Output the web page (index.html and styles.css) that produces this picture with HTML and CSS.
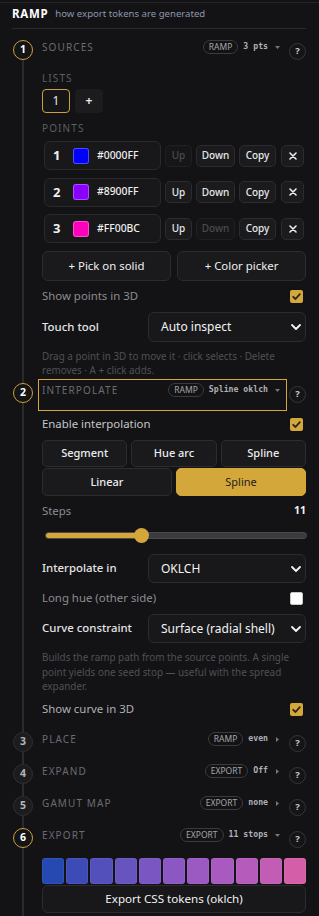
FILE: index.html
```html
<!DOCTYPE html>
<html>
<head>
<meta charset="utf-8">
<link rel="stylesheet" href="styles.css">
</head>
<body>
<div class="panel">
  <div class="top"><span class="brand">RAMP</span><span class="sub">how export tokens are generated</span></div>
  <div class="steps">
    <section class="step">
      <div class="head">
        <span class="num on">1</span>
        <div class="hb">
          <span class="title">SOURCES</span>
          <span class="pill">RAMP</span><span class="val">3 pts</span>
          <span class="caret"><svg width="5" height="3" viewBox="0 0 5 3"><path d="M0 0H5L2.5 3Z" fill="#77777c"/></svg></span>
        </div>
        <span class="help">?</span>
      </div>
      <div class="body b1">
        <div class="label">LISTS</div>
        <div class="lists"><button class="lb sel">1</button><button class="lb plus">+</button></div>
        <div class="label l2">POINTS</div>
        <div class="points">
          <div class="pt">
            <div class="pbox"><span class="pn">1</span><span class="sw" style="background:#0000FF"></span><span class="hex">#0000FF</span></div>
            <button class="sb up dis">Up</button><button class="sb down">Down</button><button class="sb copy">Copy</button><button class="sb x"><svg width="8" height="8" viewBox="0 0 8 8"><path d="M1 1L7 7M7 1L1 7" stroke="#ececee" stroke-width="1.6" stroke-linecap="round"/></svg></button>
          </div>
          <div class="pt">
            <div class="pbox"><span class="pn">2</span><span class="sw" style="background:#8900FF"></span><span class="hex">#8900FF</span></div>
            <button class="sb up">Up</button><button class="sb down">Down</button><button class="sb copy">Copy</button><button class="sb x"><svg width="8" height="8" viewBox="0 0 8 8"><path d="M1 1L7 7M7 1L1 7" stroke="#ececee" stroke-width="1.6" stroke-linecap="round"/></svg></button>
          </div>
          <div class="pt">
            <div class="pbox"><span class="pn">3</span><span class="sw" style="background:#FF00BC"></span><span class="hex">#FF00BC</span></div>
            <button class="sb up">Up</button><button class="sb down dis">Down</button><button class="sb copy">Copy</button><button class="sb x"><svg width="8" height="8" viewBox="0 0 8 8"><path d="M1 1L7 7M7 1L1 7" stroke="#ececee" stroke-width="1.6" stroke-linecap="round"/></svg></button>
          </div>
        </div>
        <div class="pick"><button>+ Pick on solid</button><button>+ Color picker</button></div>
        <div class="check-row dim"><span>Show points in 3D</span><span class="cb"><svg width="13" height="13" viewBox="0 0 13 13"><path d="M3.2 6.8L5.5 9L9.8 4.2" stroke="#2a2418" stroke-width="1.8" fill="none" stroke-linecap="round" stroke-linejoin="round"/></svg></span></div>
        <div class="field"><span class="lab">Touch tool</span><div class="select"><span>Auto inspect</span><svg width="10" height="6" viewBox="0 0 10 6"><path d="M1 1L5 5L9 1" stroke="#f2f2f2" stroke-width="1.8" fill="none" stroke-linecap="round" stroke-linejoin="round"/></svg></div></div>
        <p class="hint">Drag a point in 3D to move it · click selects · Delete<br>removes · A + click adds.</p>
      </div>
    </section>

    <section class="step">
      <div class="head">
        <span class="num on">2</span>
        <div class="hb focus">
          <span class="title">INTERPOLATE</span>
          <span class="pill">RAMP</span><span class="val">Spline oklch</span>
          <span class="caret"><svg width="5" height="3" viewBox="0 0 5 3"><path d="M0 0H5L2.5 3Z" fill="#77777c"/></svg></span>
        </div>
        <span class="help">?</span>
      </div>
      <div class="body b2">
        <div class="check-row en"><span>Enable interpolation</span><span class="cb"><svg width="13" height="13" viewBox="0 0 13 13"><path d="M3.2 6.8L5.5 9L9.8 4.2" stroke="#2a2418" stroke-width="1.8" fill="none" stroke-linecap="round" stroke-linejoin="round"/></svg></span></div>
        <div class="seg three"><button>Segment</button><button>Hue arc</button><button>Spline</button></div>
        <div class="seg two"><button>Linear</button><button class="act">Spline</button></div>
        <div class="steps-row"><span>Steps</span><span class="count">11</span></div>
        <div class="slider"><div class="track"><div class="fill" style="width:36.6%"></div><span class="thumb" style="left:36.6%"></span></div></div>
        <div class="field f-int"><span class="lab">Interpolate in</span><div class="select"><span>OKLCH</span><svg width="10" height="6" viewBox="0 0 10 6"><path d="M1 1L5 5L9 1" stroke="#f2f2f2" stroke-width="1.8" fill="none" stroke-linecap="round" stroke-linejoin="round"/></svg></div></div>
        <div class="check-row dim"><span>Long hue (other side)</span><span class="cb off"></span></div>
        <div class="field"><span class="lab">Curve constraint</span><div class="select"><span>Surface (radial shell)</span><svg width="10" height="6" viewBox="0 0 10 6"><path d="M1 1L5 5L9 1" stroke="#f2f2f2" stroke-width="1.8" fill="none" stroke-linecap="round" stroke-linejoin="round"/></svg></div></div>
        <p class="hint h2">Builds the ramp path from the source points. A single<br>point yields one seed stop — useful with the spread<br>expander.</p>
        <div class="check-row lite"><span>Show curve in 3D</span><span class="cb"><svg width="13" height="13" viewBox="0 0 13 13"><path d="M3.2 6.8L5.5 9L9.8 4.2" stroke="#2a2418" stroke-width="1.8" fill="none" stroke-linecap="round" stroke-linejoin="round"/></svg></span></div>
      </div>
    </section>

    <section class="step">
      <div class="head">
        <span class="num">3</span>
        <div class="hb">
          <span class="title">PLACE</span>
          <span class="pill">RAMP</span><span class="val">even</span>
          <span class="caret"><svg width="3" height="5" viewBox="0 0 3 5"><path d="M0 0V5L3 2.5Z" fill="#77777c"/></svg></span>
        </div>
        <span class="help">?</span>
      </div>
    </section>

    <section class="step">
      <div class="head">
        <span class="num">4</span>
        <div class="hb">
          <span class="title">EXPAND</span>
          <span class="pill">EXPORT</span><span class="val">Off</span>
          <span class="caret"><svg width="3" height="5" viewBox="0 0 3 5"><path d="M0 0V5L3 2.5Z" fill="#77777c"/></svg></span>
        </div>
        <span class="help">?</span>
      </div>
    </section>

    <section class="step">
      <div class="head">
        <span class="num">5</span>
        <div class="hb">
          <span class="title">GAMUT MAP</span>
          <span class="pill">EXPORT</span><span class="val">none</span>
          <span class="caret"><svg width="3" height="5" viewBox="0 0 3 5"><path d="M0 0V5L3 2.5Z" fill="#77777c"/></svg></span>
        </div>
        <span class="help">?</span>
      </div>
    </section>

    <section class="step">
      <div class="head">
        <span class="num on">6</span>
        <div class="hb">
          <span class="title">EXPORT</span>
          <span class="pill">EXPORT</span><span class="val">11 stops</span>
          <span class="caret"><svg width="5" height="3" viewBox="0 0 5 3"><path d="M0 0H5L2.5 3Z" fill="#77777c"/></svg></span>
        </div>
        <span class="help">?</span>
      </div>
      <div class="body b6">
        <div class="swatches">
          <span style="background:#2549b1"></span>
          <span style="background:#3c4bb6"></span>
          <span style="background:#5350bb"></span>
          <span style="background:#6754bf"></span>
          <span style="background:#7a56c2"></span>
          <span style="background:#8b58c3"></span>
          <span style="background:#9b59c2"></span>
          <span style="background:#a95ac0"></span>
          <span style="background:#b55bbb"></span>
          <span style="background:#c25cb4"></span>
          <span style="background:#d45fa8"></span>
        </div>
        <button class="export">Export CSS tokens (oklch)</button>
      </div>
    </section>
  </div>
</div>
</body>
</html>
```
FILE: styles.css
```css
* { box-sizing: border-box; }
html, body { margin: 0; padding: 0; }
body {
  background: #131315;
  color: #e6e6e8;
  font-family: "Noto Sans", "Open Sans", sans-serif;
  font-size: 11.4px;
  line-height: 1.3;
  width: 319px;
}
button {
  font: inherit;
  color: inherit;
  margin: 0;
  padding: 0;
  cursor: pointer;
}
p { margin: 0; }

.panel {
  margin-top: 2px;
  border-top: 1px solid #26262a;
  padding: 0 13px 0 12px;
}
.top {
  height: 26px;
  display: flex;
  align-items: center;
  gap: 7px;
  padding-bottom: 3px;
  border-bottom: 1px solid #2a2a2e;
}
.brand {
  font-weight: 700;
  font-size: 11.5px;
  letter-spacing: 0.7px;
  color: #ffffff;
}
.sub {
  font-size: 9.6px;
  color: #8b96ae;
}

.steps {
  padding: 7px 0 10px 1px;
  background: linear-gradient(#2a2a2e, #2a2a2e) no-repeat 10px 20px / 2px 100%;
}
.head {
  display: flex;
  height: 32px;
}
.num {
  flex: none;
  width: 20px;
  height: 20px;
  margin-top: 4px;
  border-radius: 50%;
  border: 1.5px solid #2f2f33;
  background: #1c1c1f;
  display: flex;
  align-items: center;
  justify-content: center;
  font-size: 10.5px;
  font-weight: 700;
  color: #b5b5ba;
}
.num.on {
  border-color: #c9a23f;
  background: #141416;
  color: #ffffff;
}
.hb {
  flex: 1;
  margin-left: 5px;
  height: 32px;
  border: 1px solid transparent;
  padding: 3px 6px 0 3px;
  display: flex;
  align-items: flex-start;
}
.hb.focus { border-color: #d4a73b; }
.title {
  flex: 1;
  font-size: 10px;
  line-height: 14px;
  letter-spacing: 1.1px;
  color: #6b6b71;
}
.pill {
  height: 14px;
  line-height: 12px;
  font-size: 8.5px;
  padding: 0 5px;
  border: 1px solid #3a3a3f;
  border-radius: 7px;
  color: #a6a6ab;
}
.val {
  margin-left: 5px;
  font-family: "DejaVu Sans Mono", monospace;
  font-size: 8.2px;
  font-weight: 700;
  line-height: 13px;
  color: #b0b0b5;
}
.caret {
  width: 5px;
  height: 14px;
  margin-left: 7px;
  display: flex;
  align-items: center;
  justify-content: center;
}
.help {
  flex: none;
  width: 17px;
  height: 17px;
  margin: 7px 0 0 2px;
  border: 1px solid #36363b;
  border-radius: 50%;
  background: #151517;
  display: flex;
  align-items: center;
  justify-content: center;
  font-size: 9.5px;
  font-weight: 700;
  color: #c9c9ce;
}

.body { margin-left: 29px; }
.b1 { padding-bottom: 2px; }
.b2 { padding-bottom: 8px; }

.label {
  margin-top: 4px;
  font-size: 10px;
  line-height: 13px;
  letter-spacing: 1.1px;
  color: #5d5d63;
}
.label.l2 { margin-top: 9px; }
.lists {
  display: flex;
  gap: 5px;
  margin-top: 4px;
}
.lb {
  width: 28px;
  height: 24px;
  border-radius: 4px;
  background: #1c1c1f;
  border: 1px solid #1c1c1f;
  font-size: 12px;
  color: #e6e6e8;
}
.lb.sel {
  border-color: #c9a23f;
  background: #151517;
}
.lb.plus { font-weight: 700; }

.points {
  display: flex;
  flex-direction: column;
  gap: 7.5px;
  margin-top: 6px;
  padding: 0 2px;
}
.pt {
  display: flex;
  align-items: center;
  gap: 4px;
  height: 29px;
}
.pbox {
  flex: 1;
  height: 29px;
  display: flex;
  align-items: center;
  padding-left: 8px;
  background: #18181b;
  border: 1px solid #2a2a2e;
  border-radius: 6px;
}
.pn {
  width: 20px;
  font-size: 13px;
  font-weight: 700;
  color: #f0f0f0;
}
.sw {
  width: 16px;
  height: 16px;
  border-radius: 3px;
  border: 1px solid rgba(255, 255, 255, 0.3);
}
.hex {
  margin-left: 8px;
  font-size: 10.4px;
  font-weight: 500;
  color: #f0f0f0;
}
.sb {
  height: 22px;
  border: 1px solid #2c2c30;
  background: #1b1b1e;
  border-radius: 5px;
  font-size: 10px;
  font-weight: 500;
  color: #e8e8ea;
  display: flex;
  align-items: center;
  justify-content: center;
}
.sb.up { width: 27px; }
.sb.down { width: 39px; }
.sb.copy { width: 37px; }
.sb.x { width: 23px; margin-left: 1px; }
.sb.dis {
  color: #4a4a4f;
  background: #161618;
  border-color: #202023;
}

.pick {
  display: flex;
  gap: 6px;
  margin-top: 8px;
}
.pick button {
  flex: 1;
  height: 30px;
  background: #1a1a1d;
  border: 1px solid #2c2c30;
  border-radius: 6px;
  color: #f0f0f0;
}

.check-row {
  display: flex;
  justify-content: space-between;
  align-items: center;
  height: 21px;
  margin-top: 5px;
  padding-right: 3px;
}
.check-row.dim { color: #8c8c92; }
.check-row.en { color: #c5c5ca; margin-top: 3px; }
.check-row.lite { color: #b0b0b5; margin-top: 5.5px; }
.cb {
  width: 13px;
  height: 13px;
  border-radius: 2px;
  background: #d4a73b;
  display: flex;
}
.cb.off {
  background: #ffffff;
  border: 1px solid #c8c8c8;
}

.field {
  display: grid;
  grid-template-columns: 106px 1fr;
  align-items: center;
  margin-top: 5px;
}
.field.f-int { margin-top: 11px; }
.lab {
  font-weight: 500;
  color: #e4e4e6;
}
.select {
  height: 30px;
  display: flex;
  align-items: center;
  justify-content: space-between;
  padding: 0 4px 0 12px;
  background: #18181b;
  border: 1px solid #2c2c30;
  border-radius: 6px;
  font-size: 12px;
  color: #f2f2f2;
}
.f-int .select, .b2 .field .select { height: 29px; }

.hint {
  margin-top: 7px;
  font-size: 9.9px;
  line-height: 14px;
  color: #505056;
}
.hint.h2 { line-height: 14.5px; }

.seg {
  display: grid;
  gap: 4px;
}
.seg.three {
  grid-template-columns: repeat(3, 1fr);
  margin-top: 5px;
}
.seg.two {
  grid-template-columns: repeat(2, 1fr);
  margin-top: 1px;
}
.seg button {
  height: 27px;
  background: #1a1a1d;
  border: 1px solid #2c2c30;
  border-radius: 5px;
  font-size: 11px;
  font-weight: 500;
  color: #ececee;
}
.seg.two button { height: 28px; }
.seg button.act {
  background: #d4a73b;
  border-color: #d4a73b;
  color: #1d1d1d;
  font-weight: 400;
}

.steps-row {
  display: flex;
  justify-content: space-between;
  align-items: center;
  height: 20px;
  margin-top: 5px;
  color: #8c8c92;
}
.count {
  font-size: 10.5px;
  font-weight: 700;
  color: #f0f0f0;
}

.slider {
  height: 16px;
  margin: 6px -1px 0 3px;
  display: flex;
  align-items: center;
}
.track {
  position: relative;
  flex: 1;
  height: 7px;
  border-radius: 4px;
  background: #3b3b3e;
  border: 1px solid #4a4a4d;
}
.fill {
  height: 100%;
  background: #d4a73b;
  border-radius: 3px 0 0 3px;
}
.thumb {
  position: absolute;
  top: 50%;
  width: 15px;
  height: 15px;
  margin: -7.5px 0 0 -7.5px;
  border-radius: 50%;
  background: #d4a73b;
}

.b6 { padding-top: 2px; }
.swatches {
  display: flex;
  gap: 2px;
}
.swatches span {
  flex: 1;
  height: 26px;
  border-radius: 3px;
  box-shadow: inset 0 0 0 1px rgba(255, 255, 255, 0.06);
}
.export {
  display: block;
  width: 100%;
  height: 28px;
  margin-top: 1px;
  background: #18181b;
  border: 1px solid #2c2c30;
  border-radius: 6px;
  font-size: 11.6px;
  color: #f2f2f2;
}
```
